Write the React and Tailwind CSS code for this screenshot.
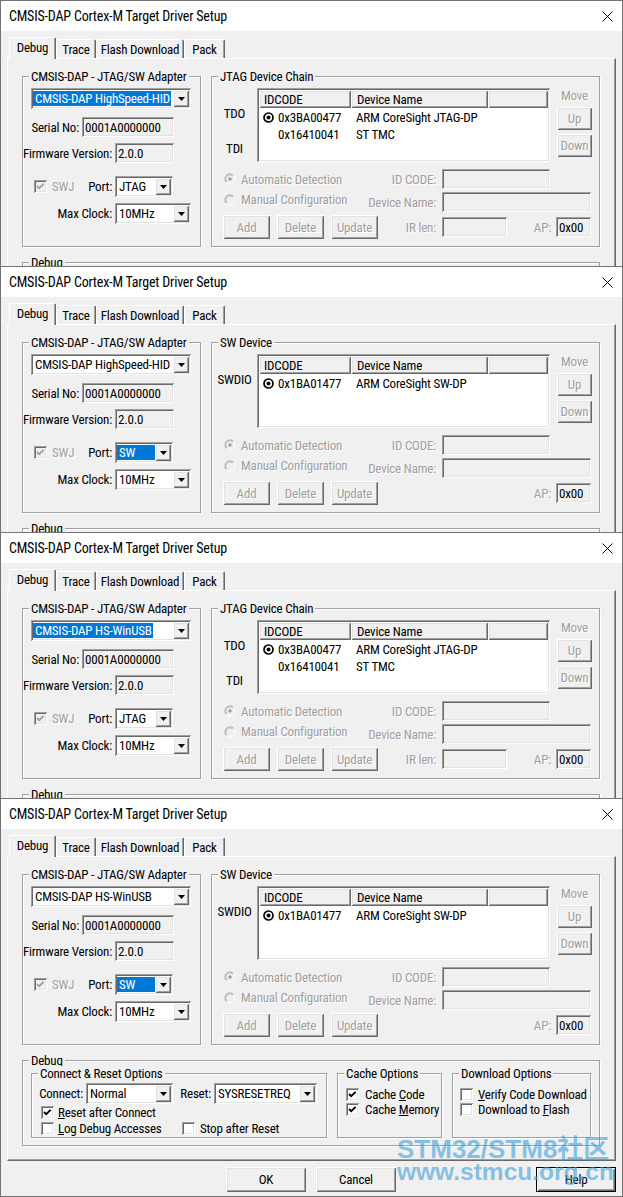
import React from "react";

const FONT = "font-['Roboto_Condensed','Liberation_Sans',Arial,sans-serif]";
const SUNKEN =
  "shadow-[inset_1px_1px_0_#a0a0a0,inset_-1px_-1px_0_#ffffff,inset_2px_2px_0_#696969,inset_-2px_-2px_0_#e3e3e3]";
const RAISED =
  "shadow-[inset_1px_1px_0_#ffffff,inset_-1px_-1px_0_#696969,inset_2px_2px_0_#e3e3e3,inset_-2px_-2px_0_#a0a0a0]";
const DISABLED = "text-[#a0a0a0] [text-shadow:1px_1px_0_#ffffff]";
const ETCHED = "border border-[#a0a0a0] shadow-[inset_1px_1px_0_#ffffff,1px_1px_0_#ffffff]";

function Label({ className = "", children }) {
  return <span className={`flex shrink-0 justify-end whitespace-nowrap ${className}`}>{children}</span>;
}

function DropButton() {
  return (
    <span className={`flex w-[16px] shrink-0 items-center justify-center bg-[#f0f0f0] ${RAISED}`}>
      <svg width="7" height="4" viewBox="0 0 7 4">
        <path d="M0 0h7L3.5 4z" fill="#000" />
      </svg>
    </span>
  );
}

// mode: "none" | "text" (selection behind the text) | "fill" (whole edit area selected)
function Combo({ className = "", value, mode = "none" }) {
  return (
    <div className={`flex shrink-0 bg-white p-[2px] ${SUNKEN} ${className}`}>
      <div className="flex min-w-0 flex-1 items-stretch overflow-hidden py-px whitespace-nowrap">
        {mode === "fill" ? (
          <span className="flex flex-1 items-center bg-[#0078d7] pl-[2px] text-white">{value}</span>
        ) : mode === "text" ? (
          <span className="flex items-center bg-[#0078d7] pr-[1px] pl-[2px] text-white">{value}</span>
        ) : (
          <span className="flex items-center pl-[2px]">{value}</span>
        )}
      </div>
      <DropButton />
    </div>
  );
}

function Field({ className = "", value = "" }) {
  return (
    <div className={`flex shrink-0 items-center bg-[#f0f0f0] pl-[3px] whitespace-nowrap ${SUNKEN} ${className}`}>
      {value}
    </div>
  );
}

function Btn({ className = "", label, disabled = false, isDefault = false }) {
  return (
    <button
      type="button"
      className={`flex shrink-0 items-center justify-center bg-[#f0f0f0] ${RAISED} ${
        isDefault ? "border border-black" : ""
      } ${disabled ? DISABLED : "text-black"} ${className}`}
    >
      {label}
    </button>
  );
}

function Check({ checked = false, disabled = false, className = "" }) {
  return (
    <span
      className={`block h-[13px] w-[13px] shrink-0 ${disabled ? "bg-[#f0f0f0]" : "bg-white"} ${SUNKEN} ${className}`}
    >
      {checked && (
        <svg width="13" height="13" viewBox="0 0 13 13" className="block">
          <polyline
            points="3,6 5.2,8.2 9.6,3.8"
            fill="none"
            stroke={disabled ? "#a0a0a0" : "#000"}
            strokeWidth="1.9"
          />
        </svg>
      )}
    </span>
  );
}

function CheckRow({ checked, children, className = "", textClass = "ml-[4px]" }) {
  return (
    <div className={`flex h-[13px] items-center whitespace-nowrap ${className}`}>
      <Check checked={checked} />
      <span className={textClass}>{children}</span>
    </div>
  );
}

// Greyed-out classic option button
function OptionDot({ checked = false }) {
  return (
    <svg width="12" height="12" viewBox="0 0 12 12" className="block shrink-0">
      <circle cx="6" cy="6" r="5" fill="#f0f0f0" />
      <path d="M2.46 9.54A5 5 0 0 1 9.54 2.46" fill="none" stroke="#a0a0a0" />
      <path d="M9.54 2.46A5 5 0 0 1 2.46 9.54" fill="none" stroke="#ffffff" />
      <path d="M3.17 8.83A4 4 0 0 1 8.83 3.17" fill="none" stroke="#c8c8c8" />
      {checked && <circle cx="6" cy="6" r="1.8" fill="#a0a0a0" />}
    </svg>
  );
}

// State image shown in front of the active device row
function ListRadio() {
  return (
    <svg width="11" height="11" viewBox="0 0 11 11" className="block shrink-0">
      <circle cx="5.5" cy="5.5" r="4.5" fill="#fff" stroke="#000" strokeWidth="1.7" />
      <circle cx="5.5" cy="5.5" r="2" fill="#000" />
    </svg>
  );
}

function Group({ title, className = "", children }) {
  return (
    <div className={`relative shrink-0 ${ETCHED} ${className}`}>
      <span className="absolute -top-[8px] left-[6px] bg-[#f0f0f0] px-[2px] leading-[15px] whitespace-nowrap">
        {title}
      </span>
      {children}
    </div>
  );
}

function HeaderCell({ className = "", children }) {
  return (
    <div className={`flex h-full shrink-0 items-center bg-[#f0f0f0] whitespace-nowrap ${RAISED} ${className}`}>
      {children}
    </div>
  );
}

function ListView({ rows }) {
  return (
    <div className={`h-[74px] w-[293px] shrink-0 bg-white p-[2px] ${SUNKEN}`}>
      <div className="flex h-[18px]">
        <HeaderCell className="w-[92px] pl-[5px]">IDCODE</HeaderCell>
        <HeaderCell className="w-[137px] pl-[6px]">Device Name</HeaderCell>
        <HeaderCell className="flex-1" />
      </div>
      <div className="pt-px">
        {rows.map((r) => (
          <div key={r.id} className="flex h-[17px] items-center whitespace-nowrap">
            <div className="flex w-[92px] shrink-0 items-center pl-[4px]">
              {r.active ? <ListRadio /> : <span className="block w-[11px]" />}
              <span className="ml-[4px]">{r.id}</span>
            </div>
            <span className="pl-[5px]">{r.name}</span>
          </div>
        ))}
      </div>
    </div>
  );
}

function TitleBar() {
  return (
    <div className="flex h-[30px] shrink-0 items-center justify-between bg-white pr-[9px] pl-[8px] text-[14px] tracking-[-0.2px]">
      <span>CMSIS-DAP Cortex-M Target Driver Setup</span>
      <svg width="11" height="11" viewBox="0 0 11 11" className="block">
        <path d="M0.5 0.5L10.5 10.5M10.5 0.5L0.5 10.5" stroke="#000" strokeWidth="1" />
      </svg>
    </div>
  );
}

function Tabs() {
  const others = [
    { label: "Trace", w: "w-[40px]" },
    { label: "Flash Download", w: "w-[88px]" },
    { label: "Pack", w: "w-[41px]" },
  ];
  return (
    <div className="flex h-[21px] items-end pl-[2px] whitespace-nowrap">
      <div className="relative z-10 -mb-px flex h-[22px] w-[47px] justify-center rounded-t-[2px] border-t border-r border-l border-t-white border-r-[#696969] border-l-white bg-[#f0f0f0] pt-[2px] shadow-[inset_-1px_0_0_#a0a0a0]">
        Debug
      </div>
      {others.map((t) => (
        <div
          key={t.label}
          className={`flex h-[19px] ${t.w} justify-center rounded-t-[2px] border-t border-r border-l border-t-white border-r-[#696969] border-l-white pt-[2px] shadow-[inset_-1px_0_0_#a0a0a0]`}
        >
          {t.label}
        </div>
      ))}
    </div>
  );
}

function AdapterGroup({ adapter, adapterHot, isSW, portHot }) {
  return (
    <Group title="CMSIS-DAP - JTAG/SW Adapter" className="h-[171px] w-[179px]">
      <div className="flex flex-col pt-[11px] pl-[8px]">
        <Combo className="h-[21px] w-[160px]" value={adapter} mode={adapterHot ? "text" : "none"} />
        <div className="mt-[8px] flex h-[20px] items-center">
          <Label className="w-[48px]">Serial No:</Label>
          <Field className="ml-[3px] h-[20px] w-[92px]" value="0001A0000000" />
        </div>
        <div className="mt-[6px] flex h-[20px] items-center">
          <Label className="w-[81px]">Firmware Version:</Label>
          <Field className="ml-[3px] h-[20px] w-[59px]" value="2.0.0" />
        </div>
        <div className="mt-[13px] flex h-[21px] items-center">
          <div className="flex w-[81px] shrink-0 items-center">
            <Check checked disabled className="ml-[3px]" />
            <span className={`ml-[5px] ${DISABLED}`}>SWJ</span>
            <span className="ml-auto">Port:</span>
          </div>
          <Combo
            className="ml-[3px] h-[21px] w-[58px]"
            value={isSW ? "SW" : "JTAG"}
            mode={portHot ? "fill" : "none"}
          />
        </div>
        <div className="mt-[6px] flex h-[21px] items-center">
          <Label className="w-[81px]">Max Clock:</Label>
          <Combo className="ml-[3px] h-[21px] w-[76px]" value="10MHz" />
        </div>
      </div>
    </Group>
  );
}

function ChainGroup({ isSW }) {
  const rows = isSW
    ? [{ active: true, id: "0x1BA01477", name: "ARM CoreSight SW-DP" }]
    : [
        { active: true, id: "0x3BA00477", name: "ARM CoreSight JTAG-DP" },
        { active: false, id: "0x16410041", name: "ST TMC" },
      ];
  return (
    <Group title={isSW ? "SW Device" : "JTAG Device Chain"} className="h-[171px] w-[389px]">
      <div className="flex flex-col">
        <div className="flex pt-[11px]">
          <div className="flex w-[45px] shrink-0 flex-col items-center pt-[18px]">
            {isSW ? (
              <span>SWDIO</span>
            ) : (
              <>
                <span>TDO</span>
                <span className="mt-[20px]">TDI</span>
              </>
            )}
          </div>
          <ListView rows={rows} />
          <div className="ml-[7px] flex w-[35px] shrink-0 flex-col items-center">
            <span className={DISABLED}>Move</span>
            <Btn className="mt-[4px] h-[23px] w-[35px]" label="Up" disabled />
            <Btn className="mt-[4px] h-[23px] w-[35px]" label="Down" disabled />
          </div>
        </div>

        <div className="mt-[7px] flex h-[20px] items-center pl-[12px]">
          <div className="flex w-[150px] shrink-0 items-center whitespace-nowrap">
            <OptionDot checked />
            <span className={`ml-[5px] ${DISABLED}`}>Automatic Detection</span>
          </div>
          <Label className={`w-[62px] ${DISABLED}`}>ID CODE:</Label>
          <Field className="ml-[6px] h-[20px] w-[108px]" />
        </div>

        <div className="mt-[3px] flex h-[20px] items-center pl-[12px]">
          <div className="flex w-[150px] shrink-0 items-center self-start whitespace-nowrap">
            <OptionDot />
            <span className={`ml-[5px] ${DISABLED}`}>Manual Configuration</span>
          </div>
          <Label className={`w-[62px] ${DISABLED}`}>Device Name:</Label>
          <Field className="ml-[6px] h-[20px] w-[149px]" />
        </div>

        <div className="mt-[3px] flex h-[24px] items-center pr-[8px] pl-[11px]">
          <Btn className="h-[24px] w-[47px]" label="Add" disabled />
          <Btn className="ml-[7px] h-[24px] w-[47px]" label="Delete" disabled />
          <Btn className="ml-[7px] h-[24px] w-[47px]" label="Update" disabled />
          {!isSW && (
            <>
              <Label className={`w-[58px] ${DISABLED}`}>IR len:</Label>
              <Field className="ml-[6px] h-[20px] w-[65px]" />
            </>
          )}
          <div className="ml-auto flex items-center">
            <span className={DISABLED}>AP:</span>
            <Field className="ml-[5px] h-[20px] w-[35px]" value="0x00" />
          </div>
        </div>
      </div>
    </Group>
  );
}

function DebugGroup() {
  return (
    <Group title="Debug" className="mt-[15px] h-[86px] w-[578px]">
      <div className="flex pt-[12px] pl-[8px]">
        <Group title="Connect & Reset Options" className="h-[65px] w-[296px]">
          <div className="flex flex-col pt-[9px] pl-[7px]">
            <div className="flex h-[21px] items-center">
              <Label className="w-[44px]">Connect:</Label>
              <Combo className="ml-[3px] h-[21px] w-[87px]" value="Normal" />
              <Label className="ml-[8px] w-[30px]">Reset:</Label>
              <Combo className="ml-[3px] h-[21px] w-[103px]" value="SYSRESETREQ" />
            </div>
            <div className="mt-[2px] pl-[2px]">
              <CheckRow checked>
                <span className="underline">R</span>eset after Connect
              </CheckRow>
              <div className="mt-[3px] flex">
                <CheckRow className="w-[141px]">
                  <span className="underline">L</span>og Debug Accesses
                </CheckRow>
                <CheckRow textClass="ml-[5px]">Stop after Reset</CheckRow>
              </div>
            </div>
          </div>
        </Group>

        <Group title="Cache Options" className="ml-[10px] h-[65px] w-[105px]">
          <div className="flex flex-col pt-[14px] pl-[8px]">
            <CheckRow checked textClass="ml-[6px]">
              Cache <span className="underline">C</span>ode
            </CheckRow>
            <CheckRow checked textClass="ml-[6px]" className="mt-[2px]">
              Cache <span className="underline">M</span>emory
            </CheckRow>
          </div>
        </Group>

        <Group title="Download Options" className="ml-[10px] h-[65px] w-[139px]">
          <div className="flex flex-col pt-[14px] pl-[7px]">
            <CheckRow textClass="ml-[5px]">
              <span className="underline">V</span>erify Code Download
            </CheckRow>
            <CheckRow textClass="ml-[5px]" className="mt-[2px]">
              Download to <span className="underline">F</span>lash
            </CheckRow>
          </div>
        </Group>
      </div>
    </Group>
  );
}

function Watermark() {
  return (
    <div className="pointer-events-none absolute top-[337px] left-[396px] flex flex-col font-['Liberation_Sans','Noto_Sans_CJK_SC',sans-serif] font-bold tracking-normal whitespace-nowrap text-[rgba(60,158,218,0.6)]">
      <span className="text-[26px] leading-[26px]">STM32/STM8社区</span>
      <span className="-mt-[2px] text-[24.5px] leading-[24px]">www.stmcu.org.cn</span>
    </div>
  );
}

function Dialog({ isSW = false, adapter, adapterHot = false, portHot = false, clip = false }) {
  const win = (
    <div
      className={`relative flex h-[399px] w-[623px] flex-col border border-[#737373] bg-[#f0f0f0] text-[13px] leading-[15px] tracking-[-0.2px] text-black ${FONT}`}
    >
      <TitleBar />
      <div className="px-[6px] pt-[6px]">
        <Tabs />
        <div className="h-[305px] border border-t-white border-r-[#696969] border-b-[#696969] border-l-white pt-[17px] pl-[14px] shadow-[inset_-1px_-1px_0_#a0a0a0]">
          <div className="flex gap-[10px]">
            <AdapterGroup adapter={adapter} adapterHot={adapterHot} isSW={isSW} portHot={portHot} />
            <ChainGroup isSW={isSW} />
          </div>
          <DebugGroup />
        </div>
        <div className="mt-[6px] flex h-[25px] justify-end">
          <Btn className="h-[25px] w-[80px]" label="OK" />
          <Btn className="ml-[10px] h-[25px] w-[80px]" label="Cancel" />
          <Btn className="ml-[140px] h-[25px] w-[80px]" label="Help" isDefault />
        </div>
      </div>
      {!clip && <Watermark />}
    </div>
  );
  return clip ? <div className="h-[266px] overflow-hidden">{win}</div> : win;
}

export default function App() {
  return (
    <div className="w-[623px] bg-white">
      <Dialog adapter="CMSIS-DAP HighSpeed-HID" adapterHot clip />
      <Dialog isSW adapter="CMSIS-DAP HighSpeed-HID" portHot clip />
      <Dialog adapter="CMSIS-DAP HS-WinUSB" adapterHot clip />
      <Dialog isSW adapter="CMSIS-DAP HS-WinUSB" portHot />
    </div>
  );
}
